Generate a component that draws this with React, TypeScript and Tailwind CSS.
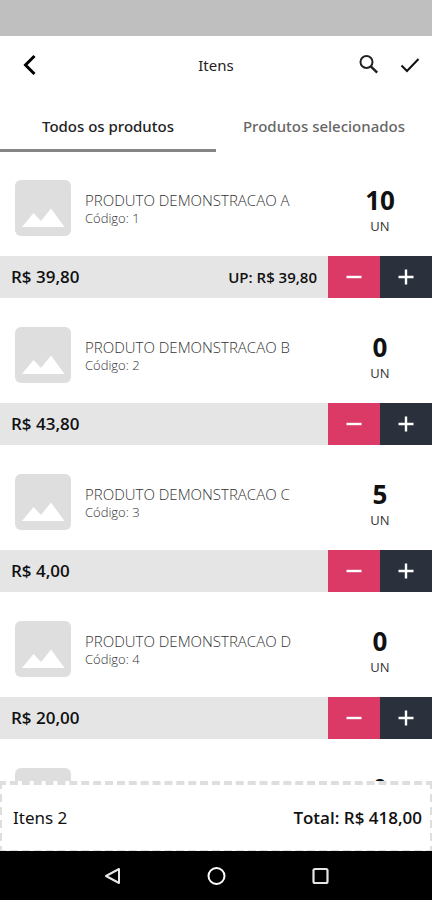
import React, { useState } from "react";

type Product = {
  id: number;
  name: string;
  price: string;
  unitPrice?: string;
  quantity: number;
};

const initialProducts: Product[] = [
  { id: 1, name: "PRODUTO DEMONSTRACAO A", price: "R$ 39,80", unitPrice: "R$ 39,80", quantity: 10 },
  { id: 2, name: "PRODUTO DEMONSTRACAO B", price: "R$ 43,80", quantity: 0 },
  { id: 3, name: "PRODUTO DEMONSTRACAO C", price: "R$ 4,00", quantity: 5 },
  { id: 4, name: "PRODUTO DEMONSTRACAO D", price: "R$ 20,00", quantity: 0 },
  { id: 5, name: "PRODUTO DEMONSTRACAO E", price: "R$ 10,00", quantity: 0 },
];

const Header = () => (
  <header className="grid shrink-0 grid-cols-3 items-center px-3 pt-[11px] pb-[13px]">
    <button type="button" aria-label="Voltar" className="flex size-9 items-center justify-center">
      <svg width="16" height="22" viewBox="0 0 16 22" fill="none" stroke="#000" strokeWidth="3">
        <path d="M12.5 2L3.5 11l9 9" />
      </svg>
    </button>
    <h1 className="text-center font-['Noto_Sans',sans-serif] text-[15px] text-[#222]">Itens</h1>
    <div className="flex items-center justify-end gap-5">
      <button type="button" aria-label="Buscar">
        <svg width="22" height="22" viewBox="0 0 22 22" fill="none" stroke="#222" strokeWidth="2">
          <circle cx="8.5" cy="8" r="6" />
          <path d="M12.8 12.3l6.4 6.4" strokeWidth="2.5" />
        </svg>
      </button>
      <button type="button" aria-label="Confirmar">
        <svg width="20" height="22" viewBox="0 0 20 22" fill="none" stroke="#111" strokeWidth="2">
          <path d="M1.5 11.5L7 17 18.5 5" />
        </svg>
      </button>
    </div>
  </header>
);

const Thumbnail = () => (
  <svg width="56" height="56" viewBox="0 0 56 56" className="shrink-0">
    <rect width="56" height="56" rx="6" fill="#dedede" />
    <path d="M7 47l11.500-14 7.500 8L36 28.500 49.500 47z" fill="#fff" />
  </svg>
);

const ProductItem = ({
  product,
  onChange,
}: {
  product: Product;
  onChange: (id: number, delta: number) => void;
}) => (
  <li className="shrink-0">
    <div className="flex items-start pt-7 pb-5 pl-[15px]">
      <Thumbnail />
      <div className="min-w-0 flex-1 pt-[11px] pl-3.5">
        <h2 className="text-[15px] leading-[18px] font-light text-[#333]">{product.name}</h2>
        <p className="text-[13px] leading-[18px] font-light text-[#333]">Código: {product.id}</p>
      </div>
      <div className="flex w-[104px] shrink-0 flex-col items-center pt-1">
        <span className="text-[26px] leading-8 font-bold text-[#111]">{product.quantity}</span>
        <span className="text-[13px] leading-5 text-[#333]">UN</span>
      </div>
    </div>
    <div className="flex h-[42px] bg-[#e5e5e5] text-[#111]">
      <div className="flex flex-1 items-center justify-between px-[11px]">
        <span className="text-[17px] font-semibold">{product.price}</span>
        {product.unitPrice && (
          <span className="text-[15px] font-semibold">UP: {product.unitPrice}</span>
        )}
      </div>
      <button
        type="button"
        aria-label="Diminuir"
        onClick={() => onChange(product.id, -1)}
        className="flex w-[52px] items-center justify-center bg-[#db3a67]"
      >
        <svg width="16" height="16" viewBox="0 0 16 16" stroke="#fff" strokeWidth="2.4">
          <path d="M0.500 8h15" />
        </svg>
      </button>
      <button
        type="button"
        aria-label="Aumentar"
        onClick={() => onChange(product.id, 1)}
        className="flex w-[52px] items-center justify-center bg-[#2b303d]"
      >
        <svg width="16" height="16" viewBox="0 0 16 16" stroke="#fff" strokeWidth="2.4">
          <path d="M0.500 8h15M8 0.500v15" />
        </svg>
      </button>
    </div>
  </li>
);

const NavigationBar = () => (
  <nav className="relative -mt-[3px] flex h-[49px] shrink-0 items-center justify-center gap-20 bg-black">
    <button type="button" aria-label="Voltar">
      <svg width="24" height="24" viewBox="0 0 24 24" fill="none" stroke="#e5e5e5" strokeWidth="2" strokeLinejoin="round">
        <path d="M19 5v14L6 12z" />
      </svg>
    </button>
    <button type="button" aria-label="Início">
      <svg width="24" height="24" viewBox="0 0 24 24" fill="none" stroke="#fff" strokeWidth="2">
        <circle cx="12.5" cy="12" r="8" />
      </svg>
    </button>
    <button type="button" aria-label="Recentes">
      <svg width="24" height="24" viewBox="0 0 24 24" fill="none" stroke="#e5e5e5" strokeWidth="2.2">
        <rect x="5.5" y="5" width="14" height="14" rx="1.5" />
      </svg>
    </button>
  </nav>
);

export default function App() {
  const [products, setProducts] = useState(initialProducts);

  const changeQuantity = (id: number, delta: number) => {
    setProducts((current) =>
      current.map((p) => (p.id === id ? { ...p, quantity: Math.max(0, p.quantity + delta) } : p))
    );
  };

  const selectedCount = products.filter((p) => p.quantity > 0).length;

  return (
    <div className="flex h-screen flex-col overflow-hidden bg-white font-['Open_Sans',sans-serif]">
      {/* Status bar */}
      <div className="h-9 shrink-0 bg-[#bfbfbf]" />

      <Header />

      <div role="tablist" className="grid shrink-0 grid-cols-2 font-['Noto_Sans',sans-serif]">
        <button
          type="button"
          role="tab"
          aria-selected="true"
          className="border-b-[3px] border-[#858585] pt-[18px] pb-[11px] text-[15px] leading-6 font-medium text-[#222]"
        >
          Todos os produtos
        </button>
        <button
          type="button"
          role="tab"
          aria-selected="false"
          className="border-b-[3px] border-transparent pt-[18px] pb-[11px] text-[15px] leading-6 font-medium text-[#666]"
        >
          Produtos selecionados
        </button>
      </div>

      <ul className="flex min-h-0 flex-1 flex-col gap-px overflow-hidden">
        {products.map((product) => (
          <ProductItem key={product.id} product={product} onChange={changeQuantity} />
        ))}
      </ul>

      {/* The side and bottom dashes run partly out of view */}
      <footer className="-mx-0.5 flex h-[73px] shrink-0 items-center justify-between border-4 border-dashed border-[#dedede] pr-2 pl-[11px] text-[17px] text-[#111]">
        <span className="font-['Noto_Sans',sans-serif]">Itens {selectedCount}</span>
        <span className="font-semibold">Total: R$ 418,00</span>
      </footer>

      <NavigationBar />
    </div>
  );
}
